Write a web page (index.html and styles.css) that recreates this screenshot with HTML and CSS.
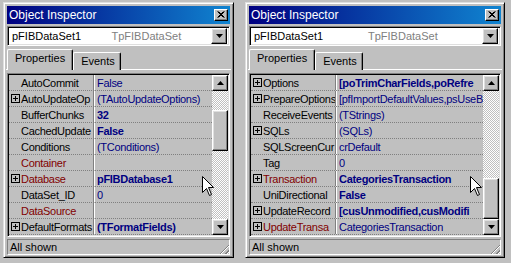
FILE: index.html
```html
<!DOCTYPE html>
<html lang="en">
<head>
  <meta charset="UTF-8">
  <title>Object Inspector</title>
  <link rel="stylesheet" href="styles.css">
</head>
<body>
  <div class="desk">

    <section class="inspector inspector-left">
      <header class="caption">
        <span>Object Inspector</span>
        <span class="close"><svg width="8" height="7" viewBox="0 0 8 7"><path d="M0.5 0.5 L6.5 6.5 M1.5 0.5 L7.5 6.5 M6.5 0.5 L0.5 6.5 M7.5 0.5 L1.5 6.5" stroke="#000" stroke-width="1"/></svg></span>
      </header>
      <div class="combo">
        <span class="obj-name">pFIBDataSet1</span>
        <span class="obj-class">TpFIBDataSet</span>
        <span class="btn drop"><svg width="7" height="4" viewBox="0 0 7 4"><polygon points="0,0 7,0 3.5,4" fill="#000"/></svg></span>
      </div>
      <div class="tabs">
        <span class="tab active">Properties</span>
        <span class="tab">Events</span>
      </div>
      <div class="grid">
        <div class="rows">
          <div class="row"><span class="name">AutoCommit</span><span class="value">False</span></div>
          <div class="row"><span class="name"><i class="plus"></i>AutoUpdateOp</span><span class="value">(TAutoUpdateOptions)</span></div>
          <div class="row"><span class="name">BufferChunks</span><span class="value bold">32</span></div>
          <div class="row"><span class="name">CachedUpdate</span><span class="value bold">False</span></div>
          <div class="row"><span class="name">Conditions</span><span class="value">(TConditions)</span></div>
          <div class="row"><span class="name link">Container</span><span class="value"></span></div>
          <div class="row"><span class="name link"><i class="plus"></i>Database</span><span class="value bold">pFIBDatabase1</span></div>
          <div class="row"><span class="name">DataSet_ID</span><span class="value">0</span></div>
          <div class="row"><span class="name link">DataSource</span><span class="value"></span></div>
          <div class="row"><span class="name"><i class="plus"></i>DefaultFormats</span><span class="value bold">(TFormatFields)</span></div>
        </div>
        <div class="scroll">
          <span class="btn arrow"><svg width="7" height="4" viewBox="0 0 7 4"><polygon points="3.5,0 7,4 0,4" fill="#000"/></svg></span>
          <div class="track"><span class="btn thumb thumb-left"></span></div>
          <span class="btn arrow"><svg width="7" height="4" viewBox="0 0 7 4"><polygon points="0,0 7,0 3.5,4" fill="#000"/></svg></span>
        </div>
      </div>
      <div class="status"><span>All shown</span><span class="grip"></span></div>
      <svg class="cursor cursor-left" width="12" height="20" viewBox="0 0 12 20"><path d="M0.5 0.5 L0.5 16.5 L4.5 12.5 L7.5 19.5 L9.5 18.5 L6.5 11.5 L11.5 11.5 Z" fill="#fff" stroke="#000"/></svg>
    </section>

    <section class="inspector inspector-right">
      <header class="caption">
        <span>Object Inspector</span>
        <span class="close"><svg width="8" height="7" viewBox="0 0 8 7"><path d="M0.5 0.5 L6.5 6.5 M1.5 0.5 L7.5 6.5 M6.5 0.5 L0.5 6.5 M7.5 0.5 L1.5 6.5" stroke="#000" stroke-width="1"/></svg></span>
      </header>
      <div class="combo">
        <span class="obj-name">pFIBDataSet1</span>
        <span class="obj-class">TpFIBDataSet</span>
        <span class="btn drop"><svg width="7" height="4" viewBox="0 0 7 4"><polygon points="0,0 7,0 3.5,4" fill="#000"/></svg></span>
      </div>
      <div class="tabs">
        <span class="tab active">Properties</span>
        <span class="tab">Events</span>
      </div>
      <div class="grid">
        <div class="rows">
          <div class="row"><span class="name"><i class="plus"></i>Options</span><span class="value bold">[poTrimCharFields,poRefre</span></div>
          <div class="row"><span class="name"><i class="plus"></i>PrepareOptions</span><span class="value">[pfImportDefaultValues,psUseB</span></div>
          <div class="row"><span class="name">ReceiveEvents</span><span class="value">(TStrings)</span></div>
          <div class="row"><span class="name"><i class="plus"></i>SQLs</span><span class="value">(SQLs)</span></div>
          <div class="row"><span class="name">SQLScreenCur</span><span class="value">crDefault</span></div>
          <div class="row"><span class="name">Tag</span><span class="value">0</span></div>
          <div class="row"><span class="name link"><i class="plus"></i>Transaction</span><span class="value bold">CategoriesTransaction</span></div>
          <div class="row"><span class="name">UniDirectional</span><span class="value bold">False</span></div>
          <div class="row"><span class="name"><i class="plus"></i>UpdateRecord</span><span class="value bold">[cusUnmodified,cusModifi</span></div>
          <div class="row"><span class="name link"><i class="plus"></i>UpdateTransa</span><span class="value">CategoriesTransaction</span></div>
        </div>
        <div class="scroll">
          <span class="btn arrow"><svg width="7" height="4" viewBox="0 0 7 4"><polygon points="3.5,0 7,4 0,4" fill="#000"/></svg></span>
          <div class="track"><span class="btn thumb thumb-right"></span></div>
          <span class="btn arrow"><svg width="7" height="4" viewBox="0 0 7 4"><polygon points="0,0 7,0 3.5,4" fill="#000"/></svg></span>
        </div>
      </div>
      <div class="status"><span>All shown</span><span class="grip"></span></div>
      <svg class="cursor cursor-right" width="12" height="20" viewBox="0 0 12 20"><path d="M0.5 0.5 L0.5 16.5 L4.5 12.5 L7.5 19.5 L9.5 18.5 L6.5 11.5 L11.5 11.5 Z" fill="#fff" stroke="#000"/></svg>
    </section>

  </div>
</body>
</html>
```

FILE: styles.css
```css
* {
  box-sizing: border-box;
  margin: 0;
  padding: 0;
}

body {
  background: #c0c0c0;
  font-family: 'Liberation Sans', Arial, sans-serif;
  font-size: 11px;
  color: #000;
}

.desk {
  display: flex;
  gap: 11px;
  padding: 2px 0 0 3px;
}

/* window frame */
.inspector {
  position: relative;
  height: 256px;
  display: flex;
  flex-direction: column;
  padding: 2px;
  border: 1px solid;
  border-color: #dfdfdf #000 #000 #dfdfdf;
  box-shadow: inset 1px 1px #fff, inset -1px -1px #808080;
}

.inspector-left {
  width: 231px;
}

.inspector-right {
  width: 260px;
}

.caption {
  height: 18px;
  margin: 1px 1px 0;
  display: flex;
  align-items: center;
  justify-content: space-between;
  padding: 0 2px 0 2px;
  color: #fff;
  font-size: 12px;
  background: linear-gradient(90deg, #000080, #1084d0);
}

.btn {
  display: flex;
  align-items: center;
  justify-content: center;
  background: #c0c0c0;
  border: 1px solid;
  border-color: #fff #000 #000 #fff;
  box-shadow: inset -1px -1px #808080, inset 1px 1px #dfdfdf;
}

.close {
  width: 14px;
  height: 12px;
  display: flex;
  align-items: center;
  justify-content: center;
  background: #c0c0c0;
  border: 1px solid;
  border-color: #fff #000 #000 #fff;
  box-shadow: inset -1px -1px #808080;
}

/* object selector */
.combo {
  height: 20px;
  margin: 2px 1px 0;
  display: flex;
  align-items: center;
  background: #fff;
  border: 1px solid;
  border-color: #808080 #fff #fff #808080;
  box-shadow: inset 1px 1px #000, inset -1px -1px #dfdfdf;
  padding: 2px 2px 2px 4px;
}

.obj-name,
.obj-class {
  flex: 1;
  white-space: nowrap;
}

.obj-class {
  color: #808080;
}

.drop {
  width: 16px;
  height: 16px;
  flex: none;
}

/* tabs */
.tabs {
  height: 22px;
  margin-top: 3px;
  display: flex;
  align-items: flex-end;
  padding-left: 1px;
  border-bottom: 1px solid #fff;
}

.tab {
  height: 18px;
  padding: 2px 5px 0 7px;
  border: 1px solid;
  border-bottom: none;
  border-color: #fff #000 #000 #fff;
  box-shadow: inset -1px 0 #808080;
  border-radius: 2px 2px 0 0;
  margin-bottom: -1px;
  background: #c0c0c0;
}

.tab.active {
  height: 21px;
  padding: 2px 7px 0 7px;
  z-index: 1;
}

/* property grid */
.grid {
  height: 164px;
  margin: 3px 1px 0;
  display: flex;
  border: 1px solid;
  border-color: #808080 #fff #fff #808080;
  box-shadow: inset 1px 1px #000, inset -1px -1px #dfdfdf;
  padding: 1px;
}

.rows {
  flex: 1;
  min-width: 0;
  letter-spacing: -0.3px;
}

.row {
  height: 16px;
  display: grid;
  grid-template-columns: 85px 1fr;
  border-bottom: 1px dotted #808080;
}

.name {
  display: flex;
  align-items: center;
  padding-left: 12px;
  position: relative;
  white-space: nowrap;
  overflow: hidden;
  border-right: 1px solid #808080;
  box-shadow: 1px 0 #fff;
}

.name.link {
  color: #800000;
}

.plus {
  position: absolute;
  left: 2px;
  top: 3px;
  width: 9px;
  height: 9px;
  border: 1px solid #000;
  background:
    linear-gradient(#000, #000) center / 5px 1px no-repeat,
    linear-gradient(#000, #000) center / 1px 5px no-repeat;
}

.value {
  display: flex;
  align-items: center;
  padding-left: 3px;
  color: #000080;
  white-space: nowrap;
  overflow: hidden;
}

.value.bold {
  font-weight: bold;
}

/* scrollbar */
.scroll {
  width: 16px;
  display: flex;
  flex-direction: column;
}

.arrow {
  width: 16px;
  height: 16px;
  flex: none;
}

.track {
  flex: 1;
  display: flex;
  flex-direction: column;
  background-color: #c0c0c0;
  background-image:
    linear-gradient(45deg, #fff 25%, transparent 25%, transparent 75%, #fff 75%),
    linear-gradient(45deg, #fff 25%, transparent 25%, transparent 75%, #fff 75%);
  background-size: 2px 2px;
  background-position: 0 0, 1px 1px;
}

.thumb {
  width: 16px;
  height: 41px;
}

.thumb-left {
  margin-top: 19px;
}

.thumb-right {
  margin-top: auto;
}

/* status bar */
.status {
  height: 16px;
  margin: 2px 1px 0;
  display: flex;
  align-items: center;
  justify-content: space-between;
  border: 1px solid;
  border-color: #808080 #fff #fff #808080;
  padding-left: 2px;
}

.grip {
  width: 12px;
  height: 12px;
  align-self: flex-end;
  background: repeating-linear-gradient(135deg, transparent 0 2px, #808080 2px 3px, #fff 3px 4px);
  clip-path: polygon(100% 0, 100% 100%, 0 100%);
}

.cursor {
  position: absolute;
  top: 173px;
}

.cursor-left {
  left: 198px;
}

.cursor-right {
  left: 224px;
}
```
